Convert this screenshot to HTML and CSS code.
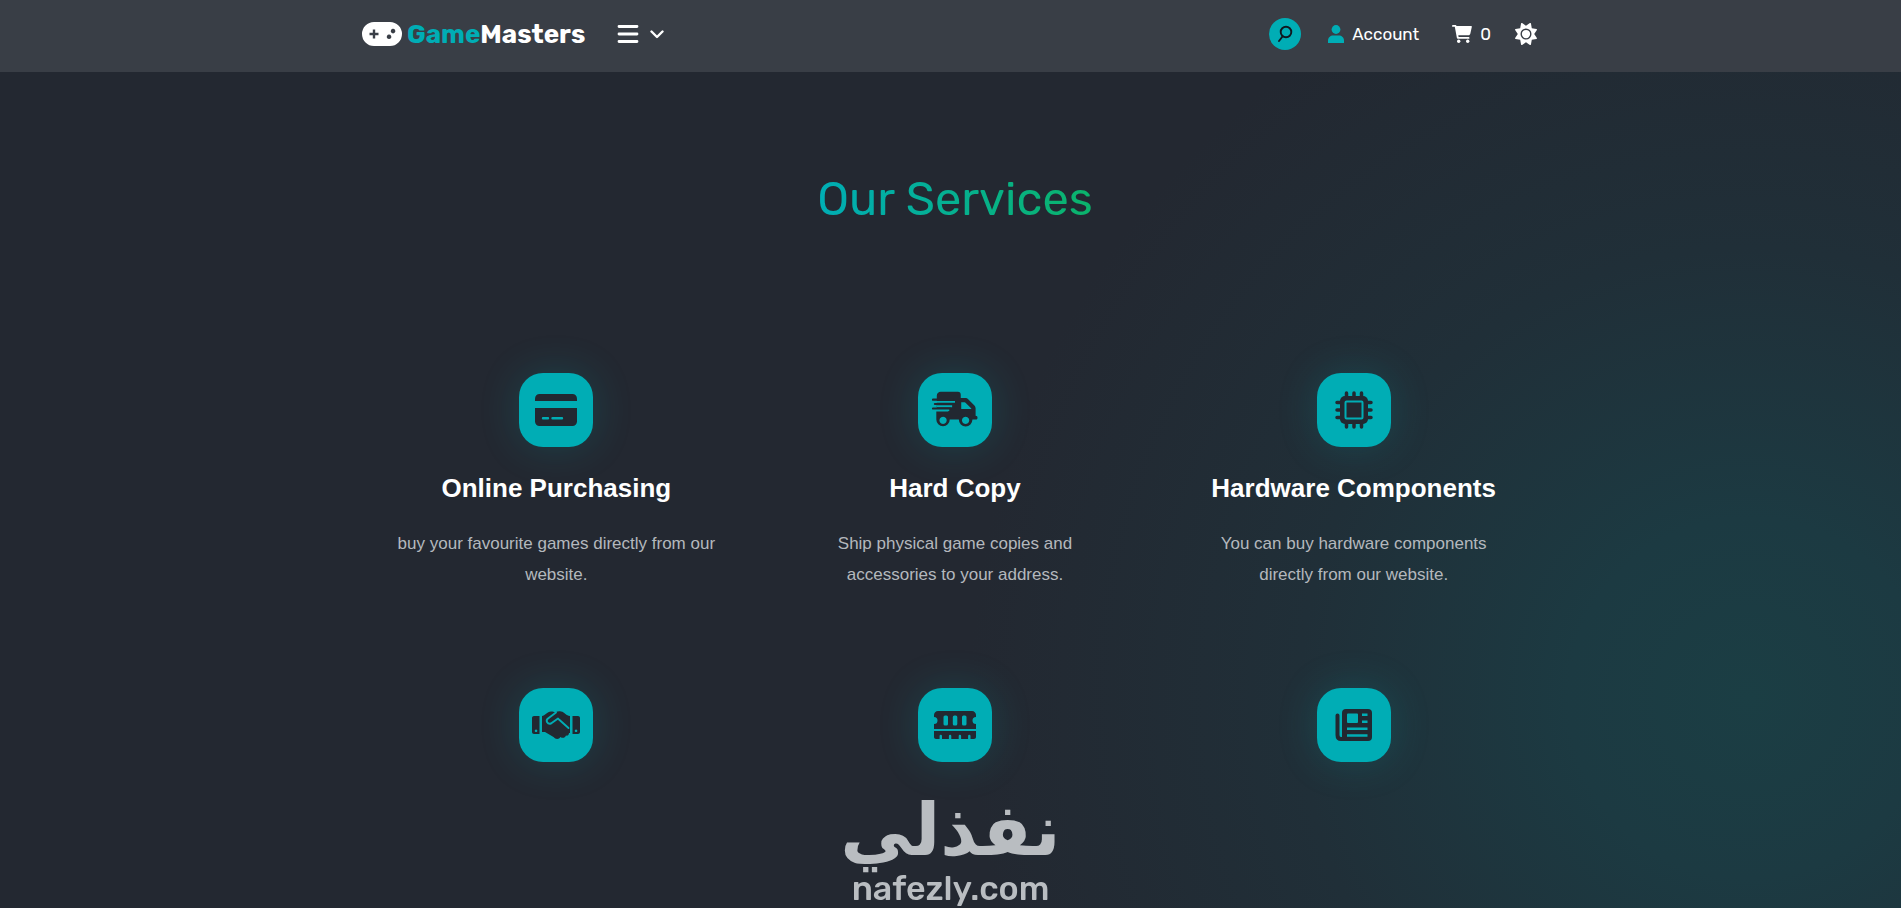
FILE: index.html
```html
<!DOCTYPE html>
<html lang="en">
  <head>
    <meta charset="UTF-8" />
    <meta name="viewport" content="width=device-width, initial-scale=1.0" />
    <title>GameMasters</title>
    <link rel="stylesheet" href="styles.css">
  </head>
  <body>
    <header class="header">
      <div class="container nav">
        <a href="#" class="logo">
          <svg class="logo-icon" viewBox="0 0 40 24">
            <path fill="#fff" fill-rule="evenodd" d="M12 0h16a12 12 0 0 1 0 24H12A12 12 0 0 1 12 0zM10.8 7.5v3.3H7.5v2.4h3.3v3.3h2.4v-3.3h3.3v-2.4h-3.3V7.5zM27 12.5a2.3 2.3 0 1 0 .1 0zM31 6.8a2.3 2.3 0 1 0 .1 0z" />
          </svg>
          <span><span class="accent">Game</span>Masters</span>
        </a>
        <button class="menu-btn" aria-label="Menu">
          <svg width="22" height="20" viewBox="0 0 22 20" stroke="#fff" stroke-width="2.8" stroke-linecap="round">
            <path d="M2 2.5h18M2 10h18M2 17.5h18" />
          </svg>
          <svg width="14" height="10" viewBox="0 0 14 10" fill="none" stroke="#fff" stroke-width="2.4" stroke-linecap="round" stroke-linejoin="round">
            <path d="M1.5 2.5L7 8l5.5-5.5" />
          </svg>
        </button>
        <div class="actions">
          <button class="search-btn" aria-label="Search">
            <svg width="16" height="18" viewBox="0 0 16 18" fill="none" stroke="#101820" stroke-width="1.9" stroke-linecap="round">
              <circle cx="9" cy="7" r="5.3" />
              <path d="M5.5 11.5L2 16" />
            </svg>
          </button>
          <a href="#" class="account">
            <svg width="16" height="18" viewBox="0 0 16 18" fill="#00adb5">
              <circle cx="8" cy="4.5" r="4.4" />
              <path d="M0 18v-2.500C0 12.500 2.500 10.500 5 10.500h6c2.500 0 5 2 5 5V18z" />
            </svg>
            Account
          </a>
          <a href="#" class="cart">
            <svg width="20" height="18" viewBox="0 0 20 18" fill="#fff">
              <path d="M0 .9C0 .4.4 0 .9 0h2.200c.8 0 1.200.4 1.400 1H19c.6 0 1 .5.8 1.100l-1.500 6.700c-.2.9-.9 1.500-1.800 1.500H6.300l.3 1.700h10c.5 0 .9.4.9.9s-.4.9-.9.9H5.800c-.5 0-.8-.3-.9-.7L2.800 1.800H.9C.4 1.800 0 1.400 0 .9z" />
              <circle cx="6.7" cy="16.2" r="1.7" />
              <circle cx="15.7" cy="16.2" r="1.7" />
            </svg>
            0
          </a>
          <button class="theme-btn" aria-label="Toggle theme">
            <svg width="22" height="22" viewBox="0 0 512 512" fill="#fff">
              <path d="M361.5 1.2c5 2.1 8.6 6.6 9.6 11.900L391 121l107.900 19.800c5.300 1 9.800 4.600 11.900 9.600s1.500 10.700-1.600 15.200L446.900 256l62.300 90.300c3.100 4.500 3.700 10.200 1.600 15.200s-6.600 8.600-11.900 9.600L391 391 371.100 498.900c-1 5.300-4.600 9.800-9.600 11.900s-10.700 1.500-15.200-1.600L256 446.900l-90.300 62.300c-4.500 3.100-10.200 3.700-15.200 1.600s-8.600-6.600-9.600-11.900L121 391 13.100 371.100c-5.300-1-9.800-4.600-11.900-9.600s-1.500-10.700 1.600-15.200L65.100 256 2.800 165.700c-3.100-4.500-3.700-10.200-1.600-15.200s6.600-8.600 11.900-9.600L121 121 140.900 13.100c1-5.300 4.600-9.800 9.600-11.900s10.700-1.500 15.200 1.600L256 65.100 346.300 2.800c4.500-3.100 10.200-3.700 15.200-1.600zM160 256a96 96 0 1 1 192 0 96 96 0 1 1 -192 0zm224 0a128 128 0 1 0 -256 0 128 128 0 1 0 256 0z" />
            </svg>
          </button>
        </div>
      </div>
    </header>

    <main>
      <div class="container">
        <h1 class="title">Our Services</h1>
        <section class="services">
          <article class="service">
            <div class="service-icon">
              <svg width="42" height="32" viewBox="0 0 42 32" fill="#222831">
                <path d="M0 7V4.500C0 2 2 0 4.500 0h33C40 0 42 2 42 4.500V7z" />
                <path fill-rule="evenodd" d="M0 14h42v13.500c0 2.500-2 4.500-4.500 4.500h-33C2 32 0 30 0 27.500zM8 23a1.200 1.200 0 0 0 0 2.400h5a1.200 1.200 0 0 0 0-2.400zM17.500 23a1.200 1.200 0 0 0 0 2.400H27a1.200 1.200 0 0 0 0-2.400z" />
              </svg>
            </div>
            <h3>Online Purchasing</h3>
            <p>buy your favourite games directly from our website.</p>
          </article>
          <article class="service">
            <div class="service-icon">
              <svg width="46" height="38" viewBox="0 0 48 38">
                <path fill="#222831" fill-rule="evenodd" d="M5 7V4c0-2.200 1.800-4 4-4h18c2 0 3 1.300 3 3v3.500h4.500c1.400 0 2.500.5 3.500 1.500l6 6c1 1 1.500 2.100 1.500 3.500V25c1.500 0 2 .8 2 2s-.7 2-2 2h-3.300a7 7 0 0 1-14.200 0H18.500a7 7 0 0 1-14 0V20H18v-2H5V7zM30.500 11v7H41v-.5L35 11.500a1.500 1.500 0 0 0-1-.5zM11.500 26a3.800 3.800 0 1 0 .1 0zM35 26a3.800 3.800 0 1 0 .1 0z" />
                <path d="M3 10.500h21M5 15h16M3 19.500h14" stroke="#00adb5" stroke-width="2" />
                <path d="M1 8.200h21M3 12.700h20M1 17.400h18" stroke="#222831" stroke-width="2.200" stroke-linecap="round" />
              </svg>
            </div>
            <h3>Hard Copy</h3>
            <p>Ship physical game copies and accessories to your address.</p>
          </article>
          <article class="service">
            <div class="service-icon">
              <svg width="38" height="38" viewBox="0 0 38 38">
                <path d="M11.500 2v34M19 2v34M26.500 2v34M2 11.500h34M2 19h34M2 26.500h34" stroke="#222831" stroke-width="3.500" stroke-linecap="round" />
                <rect x="5" y="5" width="28" height="28" rx="5" fill="#222831" />
                <rect x="10.500" y="10.500" width="17" height="17" rx="1" fill="none" stroke="#00adb5" stroke-width="2" />
              </svg>
            </div>
            <h3>Hardware Components</h3>
            <p>You can buy hardware components directly from our website.</p>
          </article>
          <article class="service">
            <div class="service-icon">
              <svg width="48" height="28" viewBox="0 0 48 28">
                <path fill="#222831" fill-rule="evenodd" d="M2 5h5.500v18H2c-1.100 0-2-.9-2-2V7c0-1.100.9-2 2-2zM4 18.500a1.300 1.300 0 1 0 .1 0zM40.500 5H46c1.100 0 2 .9 2 2v14c0 1.100-.9 2-2 2h-5.500zM44 18.500a1.300 1.300 0 1 0 .1 0z" />
                <path fill="#222831" d="M10 5c3 0 5-4.500 9-4.500 2 0 3 .5 4.500 1C25 .5 27 0 29 .5c4 .5 5 4.500 9 4.500v17h-1c0 2-1.500 3-3 2.500-1 2.500-3.500 3-5.500 1.500-1.500 2.500-5 2.500-7 0l-8.500-5h-3z" />
                <path fill="none" stroke="#00adb5" stroke-width="1.900" stroke-linecap="round" stroke-linejoin="round" d="M24 1.500l-8 6c-2.800 2.100-.5 6 3 5l7-5M27 8.500l9.500 8.500" />
              </svg>
            </div>
          </article>
          <article class="service">
            <div class="service-icon">
              <svg width="42" height="28" viewBox="0 0 42 28" fill="#222831">
                <path fill-rule="evenodd" d="M4 0h34c2.200 0 4 1.800 4 4v2a3.500 3.500 0 0 0 0 7v5H0v-5a3.500 3.500 0 0 0 0-7V4c0-2.200 1.800-4 4-4zM9.500 6v7a1.500 1.500 0 0 0 1.500 1.500h1.500A1.500 1.500 0 0 0 14 13V6a1.500 1.500 0 0 0-1.500-1.500H11A1.500 1.500 0 0 0 9.500 6zM18.800 6v7a1.500 1.500 0 0 0 1.500 1.500h1.500a1.500 1.500 0 0 0 1.500-1.500V6a1.500 1.500 0 0 0-1.500-1.500h-1.500A1.500 1.500 0 0 0 18.800 6zM28 6v7a1.500 1.500 0 0 0 1.500 1.500H31a1.500 1.500 0 0 0 1.500-1.500V6A1.500 1.500 0 0 0 31 4.500h-1.500A1.500 1.500 0 0 0 28 6z" />
                <path d="M0 20h42v6c0 1.100-.9 2-2 2h-3.500v-3a1.200 1.200 0 0 0-2.400 0v3h-7v-3a1.200 1.200 0 0 0-2.400 0v3h-7.400v-3a1.200 1.200 0 0 0-2.400 0v3H8v-3a1.200 1.200 0 0 0-2.400 0v3H2c-1.100 0-2-.9-2-2z" />
              </svg>
            </div>
          </article>
          <article class="service">
            <div class="service-icon">
              <svg width="38" height="32" viewBox="0 0 38 32">
                <rect x="7" y="0" width="30" height="32" rx="4" fill="#222831" />
                <path d="M2.500 6.500V26c0 2.500 1.200 4 3.500 4h8" fill="none" stroke="#222831" stroke-width="4" stroke-linecap="round" />
                <path d="M6 6v21" stroke="#00adb5" stroke-width="2" />
                <path d="M13 4.500h9a1 1 0 0 1 1 1V13a1 1 0 0 1-1 1h-9a1 1 0 0 1-1-1V5.500a1 1 0 0 1 1-1zM27 4.500h5.500V7H27zM27 11.500h5.500V14H27zM12 18.500h20.500V21H12zM12 25.300h20.500v2.500H12z" fill="#00adb5" />
              </svg>
            </div>
          </article>
        </section>
      </div>
    </main>

    <div class="watermark">
      <span class="watermark-ar" lang="ar" dir="rtl">نفذلي</span>
      <span class="watermark-en">nafezly.com</span>
    </div>
  </body>
</html>
```
FILE: styles.css
```css
* {
  box-sizing: border-box;
  margin: 0;
  padding: 0;
}
body {
  min-height: 100vh;
  overflow: hidden;
  background: radial-gradient(circle at 92% 698px, #1b3e44 0, #1c3a42 180px, #202f38 450px, #232831 780px);
  color: #fff;
  font-family: "Liberation Sans", Arial, sans-serif;
}
a {
  color: inherit;
  text-decoration: none;
}
button {
  border: 0;
  background: none;
  cursor: pointer;
}
svg {
  display: block;
}
.container {
  width: 100%;
  max-width: 1196px;
  margin: 0 auto;
}
.header {
  height: 72px;
  padding-left: 9px;
  background-color: #393e46;
  font-family: Rubik, Roboto, sans-serif;
}
.nav {
  display: flex;
  align-items: center;
  height: 68px;
  padding: 0 16px 0 5px;
}
.logo {
  display: flex;
  align-items: center;
  gap: 5px;
  font-size: 26px;
  font-weight: 700;
}
.logo-icon {
  width: 40px;
  height: 24px;
}
.accent {
  color: #00adb5;
}
.menu-btn {
  display: flex;
  align-items: center;
  gap: 11px;
  margin-left: 32px;
}
.actions {
  display: flex;
  align-items: center;
  margin-left: auto;
  font-size: 17px;
}
.search-btn {
  display: flex;
  align-items: center;
  justify-content: center;
  width: 32px;
  height: 32px;
  border-radius: 50%;
  background-color: #00adb5;
}
.account,
.cart {
  display: flex;
  align-items: center;
  gap: 8px;
}
.account {
  margin-left: 27px;
}
.cart {
  margin: 0 24px 0 33px;
}
main {
  padding: 99px 0 0 9px;
}
.title {
  width: fit-content;
  margin: 0 auto;
  background: linear-gradient(to right, #00adb5, #0bb36b);
  background-clip: text;
  color: transparent;
  font-family: Rubik, Roboto, sans-serif;
  font-size: 47px;
  font-weight: 400;
  line-height: 56px;
}
.services {
  display: grid;
  grid-template-columns: repeat(3, 1fr);
  row-gap: 98px;
  margin-top: 146px;
}
.service {
  padding: 0 39px;
  text-align: center;
}
.service-icon {
  display: flex;
  align-items: center;
  justify-content: center;
  width: 74px;
  height: 74px;
  margin: 0 auto;
  border-radius: 24px;
  background-color: #00adb5;
  box-shadow: 0 0 40px rgba(0, 173, 181, 0.2);
}
.service h3 {
  margin-top: 24px;
  font-size: 26px;
  line-height: 34px;
}
.service p {
  margin-top: 23px;
  color: #b4b8bd;
  font-size: 17px;
  line-height: 31px;
}
.watermark {
  position: fixed;
  bottom: 0;
  left: 0;
  right: 0;
  display: flex;
  flex-direction: column;
  align-items: center;
  color: #b9bdc1;
}
.watermark-ar {
  font-family: "DejaVu Sans", sans-serif;
  font-size: 72px;
  font-weight: 700;
  line-height: 80px;
}
.watermark-en {
  font-family: Rubik, Lato, sans-serif;
  font-size: 34px;
  font-weight: 500;
  line-height: 38px;
}
```
